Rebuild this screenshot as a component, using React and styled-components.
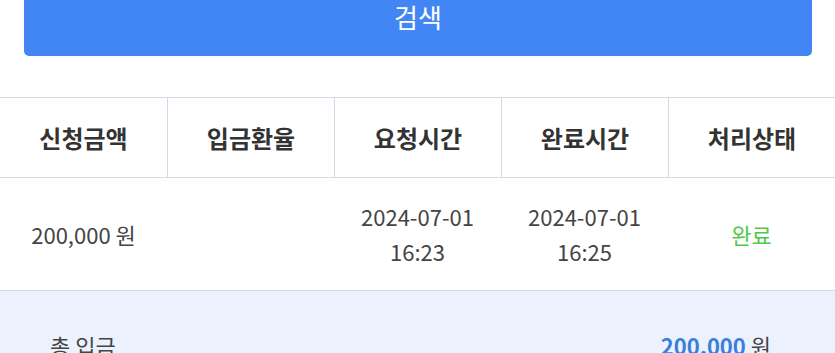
import React from "react";
import styled, { createGlobalStyle } from "styled-components";

const Global = createGlobalStyle`
  html, body { margin: 0; padding: 0; background: #fff; overflow: hidden; }
  body { font-family: "Noto Sans CJK KR", "Noto Sans", sans-serif; }
`;

const Page = styled.div`
  width: 835px;
  height: 353px;
  overflow: hidden;
  display: flex;
  flex-direction: column;
`;

const ButtonWrap = styled.div`
  padding: 0 23px 0 24px;
  margin-top: -24px;
`;

const SearchButton = styled.button`
  width: 100%;
  height: 80px;
  border: none;
  border-radius: 5px;
  background: #4286f5;
  color: #fff;
  font-family: inherit;
  font-size: 26px;
  display: flex;
  align-items: center;
  justify-content: center;
  padding: 0;
`;

const Table = styled.div`
  margin-top: 41px;
  border-top: 1px solid #d6d9e5;
`;

const Row = styled.div`
  box-sizing: border-box;
  display: grid;
  grid-template-columns: repeat(5, 1fr);
  height: ${(p) => p.$h}px;
  border-bottom: 1px solid #d6d9e5;
`;

const HeadCell = styled.div`
  display: flex;
  align-items: center;
  justify-content: center;
  font-size: 24px;
  font-weight: 700;
  color: #333;
  border-left: ${(p) => (p.$first ? "none" : "1px solid #d6d9e5")};
`;

const Cell = styled.div`
  display: flex;
  align-items: center;
  justify-content: center;
  text-align: center;
  font-size: 22px;
  line-height: 35px;
  color: ${(p) => p.$color || "#444"};
`;

const Summary = styled.div`
  flex: 1;
  background: #ecf2fd;
  display: flex;
  justify-content: space-between;
  align-items: flex-start;
  padding: 38px 64px 0 50px;
  font-size: 22px;
  color: #444;
`;

const Amount = styled.span`
  color: #3b7ddd;
  font-weight: 700;
`;

const heads = ["신청금액", "입금환율", "요청시간", "완료시간", "처리상태"];

export default function App() {
  return (
    <Page>
      <Global />
      <ButtonWrap>
        <SearchButton>검색</SearchButton>
      </ButtonWrap>
      <Table>
        <Row $h={80}>
          {heads.map((h, i) => (
            <HeadCell key={h} $first={i === 0}>
              {h}
            </HeadCell>
          ))}
        </Row>
        <Row $h={113}>
          <Cell>200,000 원</Cell>
          <Cell></Cell>
          <Cell>
            2024-07-01
            <br />
            16:23
          </Cell>
          <Cell>
            2024-07-01
            <br />
            16:25
          </Cell>
          <Cell $color="#52c84a">완료</Cell>
        </Row>
      </Table>
      <Summary>
        <span>총 입금</span>
        <span>
          <Amount>200,000</Amount> 원
        </span>
      </Summary>
    </Page>
  );
}
